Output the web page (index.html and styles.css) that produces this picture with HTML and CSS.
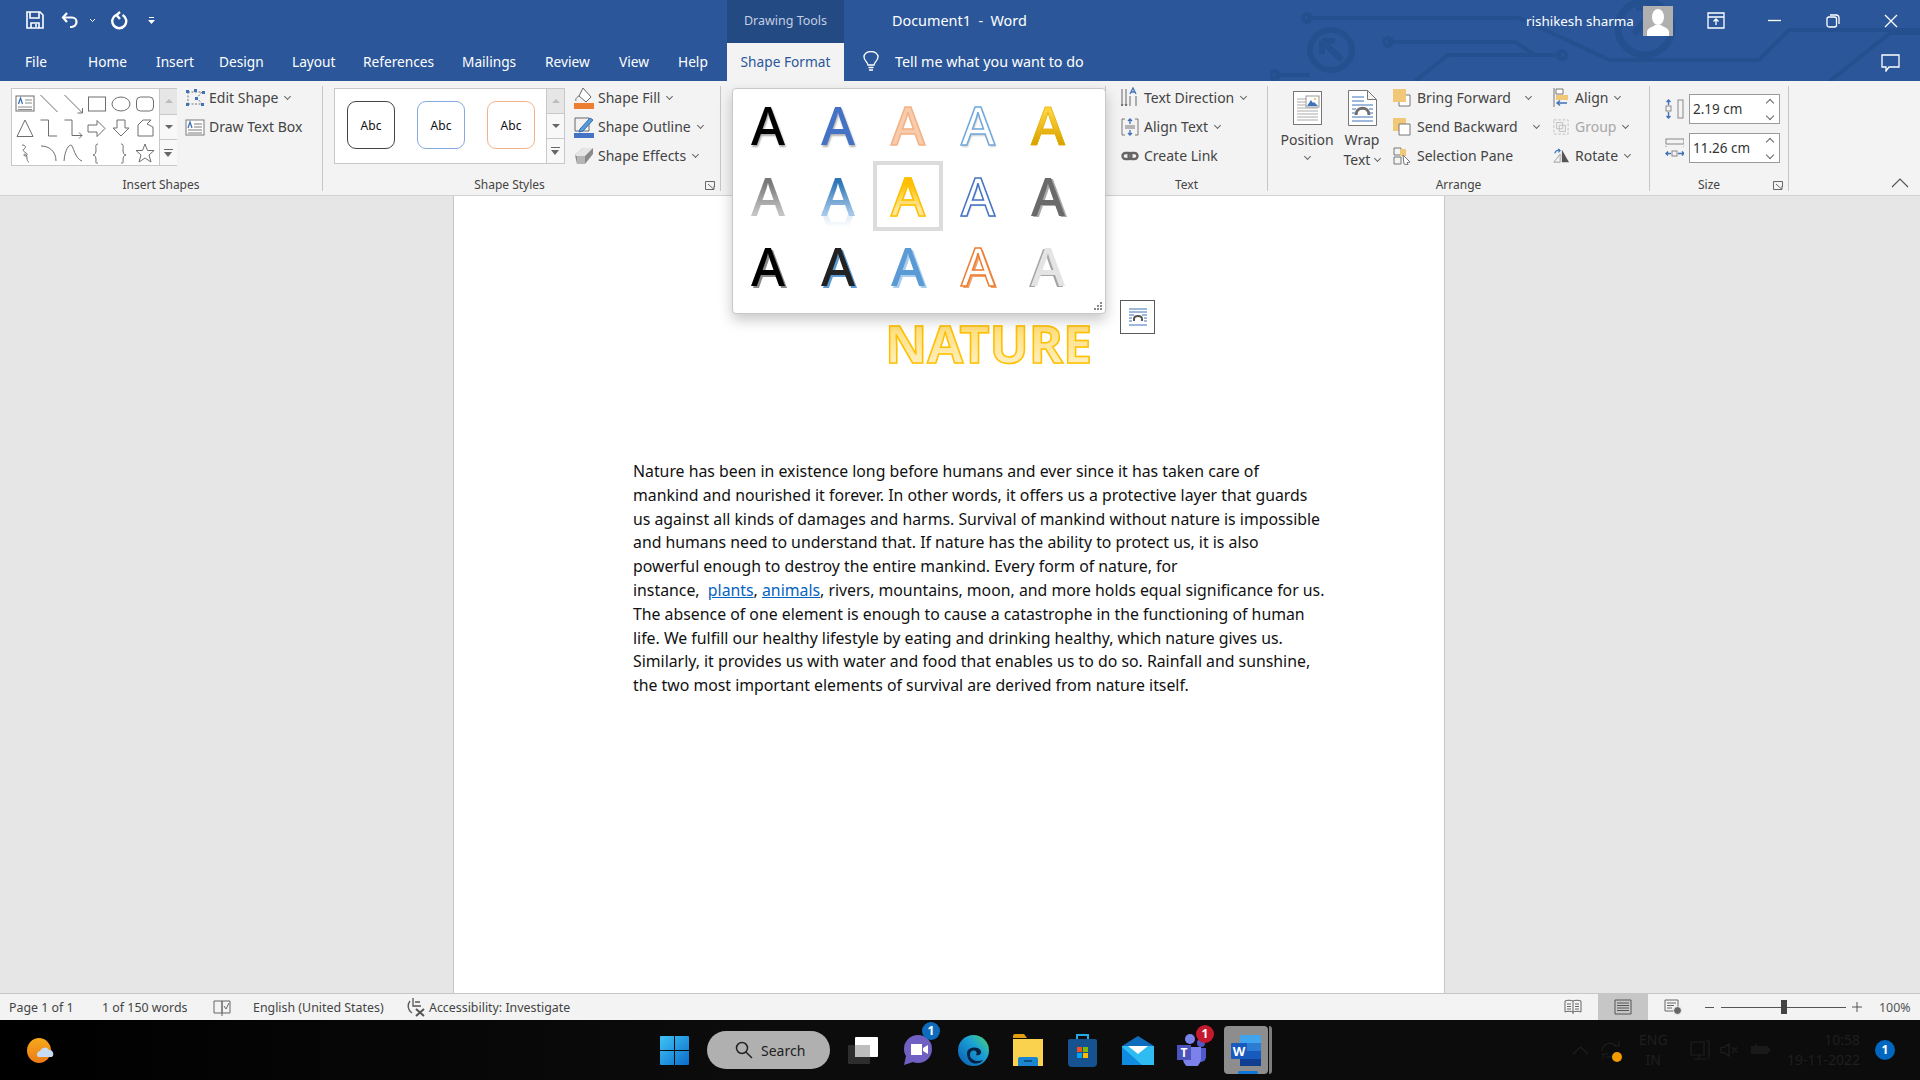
FILE: index.html
```html
<!DOCTYPE html>
<html lang="en">
<head>
<meta charset="utf-8">
<title>Document1 - Word</title>
<link rel="stylesheet" href="styles.css">
</head>
<body>
<div class="app">
  <header class="head">
    <svg class="circuit" viewBox="0 0 650 81" width="650" height="81" fill="none" stroke="#24508f" stroke-width="4">
      <path d="M37 18H249L340 60H489L519 30H700"/><circle cx="37" cy="18" r="4"/>
      <path d="M118 42H245L265 55H292"/><circle cx="118" cy="42" r="4"/><circle cx="292" cy="55" r="4"/>
      <path d="M292 55H178L145 81"/><path d="M650 33H620L560 81"/>
      <ellipse cx="61" cy="50" rx="21" ry="20" stroke-width="6"/><path d="M52 41h13M52 41v13M52 41l20 19" stroke-width="6"/>
      <circle cx="375" cy="28" r="27" stroke-width="7"/><path d="M366 8h20v18M386 8l-22 26" stroke-width="6"/>
      <circle cx="5" cy="75" r="4"/><path d="M5 75H40"/>
    </svg>
    <div class="titlebar">
      <div class="qat">
        <svg class="q-save" width="18" height="18" viewBox="0 0 18 18" fill="none" stroke="#fff" stroke-width="1.6"><path d="M1 1h13l3 3v13H1z"/><path d="M4 1v6h9V1M5 17v-5h8v5" /><path d="M10 13v3" /></svg>
        <svg class="q-undo" width="20" height="18" viewBox="0 0 18 18" fill="none" stroke="#fff" stroke-width="2.2"><path d="M6 2 2 6.500l4 4.500"/><path d="M2 6.500h9a4.500 4.500 0 0 1 4.500 4.500 5 5 0 0 1-5 5H9"/></svg>
        <svg class="chev-w" width="7" height="5" viewBox="0 0 7 5" fill="none" stroke="#fff"><path d="m1 1 2.500 2.500L6 1"/></svg>
        <svg class="q-redo" width="18" height="19" viewBox="0 0 18 19" fill="none" stroke="#fff" stroke-width="2.4"><path d="M6 4a7 7 0 1 0 6.500 0"/><path d="M10 1 6.500 4l3.500 4"/></svg>
        <svg class="q-more" width="7" height="7" viewBox="0 0 7 7" fill="#fff"><path d="M1 0h5v1H1zM0 3h7L3.500 7z"/></svg>
      </div>
      <div class="context">Drawing Tools</div>
      <div class="doc-title">Document1&nbsp; -&nbsp; Word</div>
      <div class="account">
        <span class="user">rishikesh sharma</span>
        <span class="avatar"><svg width="30" height="30" viewBox="0 0 30 30" fill="#fff"><ellipse cx="15" cy="11" rx="6" ry="8"/><path d="M4 30v-4c0-4 6-5 8-7h6c2 2 8 3 8 7v4z"/></svg></span>
        <svg class="w-display" width="18" height="17" viewBox="0 0 18 17" fill="none" stroke="#fff" stroke-width="1.300"><path d="M1 1h16v15H1zM1 5h16"/><path d="M9 13V7M6.500 9.500 9 7l2.500 2.500"/></svg>
        <svg class="w-min" width="13" height="13" viewBox="0 0 13 13" stroke="#fff" stroke-width="1.300"><path d="M0 6.500h13"/></svg>
        <svg class="w-res" width="14" height="14" viewBox="0 0 14 14" fill="none" stroke="#fff" stroke-width="1.300"><rect x="1" y="3" width="9.500" height="10" rx="2"/><path d="M4 1h6a3 3 0 0 1 3 3v6"/></svg>
        <svg class="w-close" width="14" height="14" viewBox="0 0 14 14" stroke="#fff" stroke-width="1.300"><path d="m1 1 12 12M13 1 1 13"/></svg>
      </div>
    </div>
    <nav class="tabs">
      <span class="tab">File</span><span class="tab">Home</span><span class="tab">Insert</span><span class="tab">Design</span><span class="tab">Layout</span><span class="tab">References</span><span class="tab">Mailings</span><span class="tab">Review</span><span class="tab">View</span><span class="tab">Help</span>
      <span class="tab tab-on">Shape Format</span>
      <span class="tell">
        <svg width="18" height="21" viewBox="0 0 18 21" fill="none" stroke="#fff" stroke-width="1.300"><path d="M6 14c0-3-4-4-4-8a7 5.500 0 0 1 14 0c0 4-4 5-4 8z"/><path d="M6.500 16.500h5M7 19h4"/></svg>
        Tell me what you want to do
      </span>
      <svg class="comment" width="19" height="18" viewBox="0 0 19 18" fill="none" stroke="#fff" stroke-width="1.300"><path d="M1 1h17v12H8l-3 4v-4H1z"/></svg>
    </nav>
  </header>

  <section class="ribbon">
    <div class="group g-insert">
      <div class="body">
        <div class="gal gal-shapes">
          <svg width="147" height="76" viewBox="0 0 147 76" fill="none" stroke="#6e6e6e">
            <rect x="4" y="7" width="18" height="15" fill="#fff"/><path d="M13 11h7M13 14h7M6 18h14M6 20.500h14" stroke="#8a8a8a"/><path d="M6.500 15 8.500 9l2 6" stroke="#3f72b8" stroke-width="1.300"/>
            <path d="m28.500 6 17 17M52.500 6l18 18M70.500 24v-5M70.500 24h-5"/>
            <rect x="76.500" y="8" width="17" height="14"/><ellipse cx="109" cy="15" rx="9" ry="7"/><rect x="124.500" y="8" width="17" height="14" rx="4"/>
            <path d="M5 47.500 13 31l8 16.500zM28.500 31h8v16H45M52.500 31H60v15.500h10M67 43.500l3 3-3 3M76 36h9v-4.500l8 8-8 8V43h-9zM105 31h8v8h4l-8 8-8-8h4zM126 36l5-5h8l-4 4 6 3v9h-15z"/>
            <path d="M10 56c3 0 5 2 2 4s2 3 3 5-3 3-3 1 3-1 3 3 2 4 2 4M29 57c8 0 15 5 15 15M52 72c1-12 5-16 7-16s4 14 11 16M86 55c-3 0-2 3-2 6s-1 5-3 5c2 0 3 2 3 5s-1 3 2 3M109 55c3 0 2 3 2 6s1 5 3 5c-2 0-3 2-3 5s1 3-2 3M133 55l2.500 6.500h6.500l-5 4.500 2 7-6-4-6 4 2-7-5-4.500h6.500z"/>
          </svg>
          <div class="scroll">
            <span class="sb sb-up"><i class="up"></i></span>
            <span class="sb"><i class="down"></i></span>
            <span class="sb"><i class="more"></i></span>
          </div>
        </div>
        <div class="col col-edit">
          <div class="cmd"><svg class="ic" width="20" height="18" viewBox="0 0 20 18" fill="none"><path d="M3 3h14M3 3v12M3 15h14M17 3l-5 6 5 6" stroke="#777" stroke-dasharray="2 1.500"/><path d="M1 1h3v3H1zM9 0h3v3H9zM17 2h3v3h-3zM10 8h3v3h-3zM1 14h3v3H1zM16 14h3v3h-3z" fill="#3f72b8"/></svg><span>Edit Shape</span><i class="chev"></i></div>
          <div class="cmd"><svg class="ic" width="20" height="18" viewBox="0 0 20 18" fill="none" stroke="#7a7a7a"><rect x="1" y="2" width="18" height="15" fill="#fff"/><path d="M9 6h8M9 9h8M3 12h14M3 15h14"/><path d="M3 10 5 4l2 6" stroke="#3f72b8" stroke-width="1.300"/></svg><span>Draw Text Box</span></div>
        </div>
      </div>
      <div class="label">Insert Shapes</div>
    </div>

    <div class="group g-styles">
      <div class="body">
        <div class="gal gal-styles">
          <div class="abc-row">
            <span class="abc abc-k">Abc</span>
            <span class="abc abc-b">Abc</span>
            <span class="abc abc-o">Abc</span>
          </div>
          <div class="scroll">
            <span class="sb sb-up"><i class="up"></i></span>
            <span class="sb"><i class="down"></i></span>
            <span class="sb"><i class="more"></i></span>
          </div>
        </div>
        <div class="col col-shape">
          <div class="cmd"><svg class="ic" width="20" height="22" viewBox="0 0 20 22" fill="none" stroke="#666"><path d="M9 1l8 9-5 5-7-6z" fill="#fff"/><path d="M5 9c-2 1-4 3-3 5" /><path d="M0 16h20v6H0z" fill="#ed7d31" stroke="none"/></svg><span>Shape Fill</span><i class="chev"></i></div>
          <div class="cmd"><svg class="ic" width="20" height="22" viewBox="0 0 20 22" fill="none" stroke="#666"><path d="M1 2h14v13H1z"/><path d="m6 13 10-11 3 2L9 15l-4 1z" fill="#5b9bd5" stroke="#2e6fb5"/><path d="M0 17h20v5H0z" fill="#4472c4" stroke="none"/></svg><span>Shape Outline</span><i class="chev"></i></div>
          <div class="cmd"><svg class="ic" width="20" height="20" viewBox="0 0 20 20"><path d="M1 9 9 2h10v6l-8 10H3z" fill="#8a8a8a"/><path d="M1 9 9 2h10l-8 8H2z" fill="#e5e5e5"/><path d="M3 10h8v8H3z" fill="#b5b5b5"/></svg><span>Shape Effects</span><i class="chev"></i></div>
        </div>
      </div>
      <div class="label">Shape Styles</div>
      <svg class="launch" width="10" height="9" viewBox="0 0 10 9" fill="none" stroke="#666"><path d="M9.500 6V.5H.5v8H6"/><path d="m3 3 6 5.500M9 5v3.500H5.500"/></svg>
    </div>

    <div class="group g-wordart"></div>

    <div class="group g-text">
      <div class="body">
        <div class="col">
          <div class="cmd"><svg class="ic" width="18" height="22" viewBox="0 0 18 22" fill="none" stroke="#666"><path d="M1 2v17M5 2v17M9 9v10M15 9v10M1 19l-1-2M1 19l1-2M5 19l-1-2M5 19l1-2"/><path d="m9 7 3-6 3 6M10 5h4" stroke="#3f72b8" stroke-width="1.300"/></svg><span>Text Direction</span><i class="chev"></i></div>
          <div class="cmd"><svg class="ic" width="18" height="18" viewBox="0 0 18 18" fill="none" stroke="#777"><path d="M4 1H1v16h3M14 1h3v16h-3M4 8h10M4 10h10" /><path d="M9 6V1M7 3l2-2 2 2M9 12v5M7 15l2 2 2-2" stroke="#3f72b8" stroke-width="1.300"/></svg><span>Align Text</span><i class="chev"></i></div>
          <div class="cmd"><svg class="ic" width="18" height="12" viewBox="0 0 18 12" fill="none" stroke="#666" stroke-width="2.400"><rect x="1.500" y="3" width="9" height="6" rx="3"/><rect x="7.500" y="3" width="9" height="6" rx="3"/></svg><span>Create Link</span></div>
        </div>
      </div>
      <div class="label">Text</div>
    </div>

    <div class="group g-arrange">
      <div class="body">
        <div class="big big-pos">
          <svg width="29" height="34" viewBox="0 0 29 34" fill="#fff" stroke="#777"><rect x=".5" y=".5" width="28" height="33"/><path d="M4 8h9M4 11h9M4 14h9M4 17h21M4 20h21M4 23h21M4 26h21M4 29h21" fill="none" stroke="#aaa"/><rect x="13" y="5" width="13" height="11" stroke="#999"/><path d="m14 15 4-6 2 3 1-1 4 4z" fill="#3f72b8" stroke="none"/><circle cx="22" cy="8" r="1" fill="#f0b44c" stroke="none"/></svg>
          <span>Position</span><i class="chev"></i>
        </div>
        <div class="big big-wrap">
          <svg width="29" height="36" viewBox="0 0 29 36" fill="#fff" stroke="#777"><path d="M.5.500h19l9 9v26H.5zM19.500.5v9h9"/><path d="M4 7h12M4 11h12M4 15h21M4 19h4M21 19h4M4 23h3M22 23h3M4 27h21M4 31h21" fill="none" stroke="#3f72b8"/><path d="M8 25c0-9 13-9 13 0" fill="none" stroke="#6d6d6d" stroke-width="3"/></svg>
          <span>Wrap</span><span class="wrapline">Text<i class="chev"></i></span>
        </div>
        <div class="col col-arr1">
          <div class="cmd c-bring"><svg class="ic" width="18" height="18" viewBox="0 0 18 18"><path d="M6 6h11v11H6z" fill="#fff" stroke="#777"/><path d="M0 0h13v13H0z" fill="#f0c878"/></svg><span>Bring Forward</span><i class="chev"></i></div>
          <div class="cmd c-send"><svg class="ic" width="18" height="18" viewBox="0 0 18 18"><path d="M0 0h13v13H0z" fill="#f0c878"/><path d="M6 6h11v11H6z" fill="#fff" stroke="#777"/></svg><span>Send Backward</span><i class="chev"></i></div>
          <div class="cmd"><svg class="ic" width="18" height="18" viewBox="0 0 18 18" fill="none" stroke="#777"><path d="M1 1h7v7H1zM1 10h7v7H1z"/><path d="M7 2h6v7H7z" fill="#f0c878" stroke="none"/><path d="m10 8 7 7-3 .5 1 2.500-4-1z" fill="#fff"/></svg><span>Selection Pane</span></div>
        </div>
        <div class="col col-arr2">
          <div class="cmd"><svg class="ic" width="16" height="19" viewBox="0 0 16 19" fill="none"><path d="M1 0v19" stroke="#777"/><path d="M3 1h7v5H3z" stroke="#777" fill="#fff"/><path d="M3 7h12v5H3z" fill="#f0c878"/><path d="M14 15H4M7 12.500 4 15l3 2.500" stroke="#3f72b8" stroke-width="1.400"/></svg><span>Align</span><i class="chev"></i></div>
          <div class="cmd cmd-off"><svg class="ic" width="16" height="18" viewBox="0 0 18 18" fill="none" stroke="#bbb"><path d="M1 1h16v16H1z" stroke-dasharray="3 2"/><path d="M4 4h7v7H4zM7 7h7v7H7z"/></svg><span>Group</span><i class="chev"></i></div>
          <div class="cmd"><svg class="ic" width="16" height="17" viewBox="0 0 18 17"><path d="M10 16V2l8 14z" fill="#555"/><path d="M8 7 1 16h7z" fill="none" stroke="#999"/><path d="M2 6c1-3 3-4 6-3M6 1l2 2-2 2" fill="none" stroke="#3f72b8" stroke-width="1.300"/></svg><span>Rotate</span><i class="chev"></i></div>
        </div>
      </div>
      <div class="label">Arrange</div>
    </div>

    <div class="group g-size">
      <div class="body">
        <div class="size-rows">
          <div class="size-row">
            <svg width="19" height="20" viewBox="0 0 19 20" fill="none" stroke="#888"><rect x="13" y="1" width="5" height="18"/><rect x="1" y="7" width="5" height="5"/><path d="M3.500 6V1M1.500 3l2-2 2 2M3.500 13v6M1.500 17l2 2 2-2" stroke="#3f72b8" stroke-width="1.400"/></svg>
            <div class="spin"><span>2.19 cm</span><span class="arrows"><i class="a-up"></i><i class="a-dn"></i></span></div>
          </div>
          <div class="size-row">
            <svg width="19" height="20" viewBox="0 0 19 20" fill="none" stroke="#888"><rect x="1" y="1" width="18" height="5"/><rect x="7" y="13" width="5" height="5"/><path d="M6 15.500H1M3 13.500l-2 2 2 2M13 15.500h6M17 13.500l2 2-2 2" stroke="#3f72b8" stroke-width="1.400"/><path d="M1 8v2M19 8v2" stroke-dasharray="1 1"/></svg>
            <div class="spin"><span>11.26 cm</span><span class="arrows"><i class="a-up"></i><i class="a-dn"></i></span></div>
          </div>
        </div>
      </div>
      <div class="label">Size</div>
      <svg class="launch" width="10" height="9" viewBox="0 0 10 9" fill="none" stroke="#666"><path d="M9.500 6V.5H.5v8H6"/><path d="m3 3 6 5.500M9 5v3.500H5.500"/></svg>
    </div>
    <div class="ribbon-end"><svg width="18" height="10" viewBox="0 0 18 10" fill="none" stroke="#555" stroke-width="1.200"><path d="m1 9 8-8 8 8"/></svg></div>

    <div class="wa-gallery">
      <span class="wa w1">A</span><span class="wa w2">A</span><span class="wa w3">A</span><span class="wa w4">A</span><span class="wa w5">A</span>
      <span class="wa w6">A</span><span class="wa w7">A</span><span class="wa w8 wa-sel">A</span><span class="wa w9">A</span><span class="wa w10">A</span>
      <span class="wa w11">A</span><span class="wa w12">A</span><span class="wa w13">A</span><span class="wa w14">A</span><span class="wa w15">A</span>
      <svg class="grip" width="8" height="8" viewBox="0 0 8 8" fill="#8a8a8a"><path d="M6 0h2v2H6zM3 3h2v2H3zM6 3h2v2H6zM0 6h2v2H0zM3 6h2v2H3zM6 6h2v2H6z"/></svg>
    </div>
  </section>

  <main class="workspace">
    <article class="page">
      <div class="wordart-wrap">
        <span class="wordart">NATURE</span>
        <span class="layout-btn"><svg width="20" height="20" viewBox="0 0 20 20" fill="none" stroke="#3f72b8"><path d="M1 2h18M1 5h18M1 8h5M14 8h5M1 11h3M16 11h3M1 14h3M16 14h3M1 18h18"/><path d="M6 14v-2c0-4 8-4 8 0v2" stroke="#555" stroke-width="2"/></svg></span>
      </div>
      <p class="para">Nature has been in existence long before humans and ever since it has taken care of<br>mankind and nourished it forever. In other words, it offers us a protective layer that guards<br>us against all kinds of damages and harms. Survival of mankind without nature is impossible<br>and humans need to understand that. If nature has the ability to protect us, it is also<br>powerful enough to destroy the entire mankind. Every form of nature, for<br>instance,&nbsp; <a class="lnk">plants</a>, <a class="lnk">animals</a>, rivers, mountains, moon, and more holds equal significance for us.<br>The absence of one element is enough to cause a catastrophe in the functioning of human<br>life. We fulfill our healthy lifestyle by eating and drinking healthy, which nature gives us.<br>Similarly, it provides us with water and food that enables us to do so. Rainfall and sunshine,<br>the two most important elements of survival are derived from nature itself.</p>
    </article>
  </main>

  <footer class="status">
    <div class="st-left">
      <span>Page 1 of 1</span>
      <span>1 of 150 words</span>
      <svg width="18" height="17" viewBox="0 0 18 17" fill="none" stroke="#666"><path d="M9 2H1v12h8zM9 2h8v12H9zM9 14v3"/><path d="m11 7 2 3 3-6" stroke="#666"/></svg>
      <span>English (United States)</span>
      <span class="acc"><svg width="20" height="20" viewBox="0 0 20 20" fill="none" stroke="#555" stroke-width="1.300"><path d="M4 4a8 8 0 0 0 2 12M7 1v8h8M9 5h5"/><path d="m10 12 8 7M18 12l-8 7" stroke-width="2"/></svg>Accessibility: Investigate</span>
    </div>
    <div class="st-right">
      <span class="view"><svg width="18" height="16" viewBox="0 0 18 16" fill="none" stroke="#666"><path d="M9 2C7 1 3 1 1 2v11c2-1 6-1 8 0 2-1 6-1 8 0V2c-2-1-6-1-8 0zM9 2v13M3 5h4M3 7.500h4M3 10h4M11 5h4M11 7.500h4M11 10h4"/></svg></span>
      <span class="view view-on"><svg width="18" height="16" viewBox="0 0 18 16" fill="none" stroke="#555"><path d="M1 1h16v14H1zM3 4h12M3 6.500h12M3 9h12M3 11.500h12"/></svg></span>
      <span class="view"><svg width="18" height="16" viewBox="0 0 18 16" fill="none" stroke="#666"><path d="M1 1h13v11H1zM3 4h9M3 6.500h7M3 9h5"/><circle cx="13.500" cy="11.500" r="4" fill="#666" stroke="#f3f3f3"/></svg></span>
      <div class="zoom">
        <i class="z-minus"></i>
        <div class="z-track"><i class="z-thumb"></i></div>
        <svg class="z-plus" width="10" height="10" viewBox="0 0 10 10" stroke="#555"><path d="M0 5h10M5 0v10"/></svg>
        <span class="z-val">100%</span>
      </div>
    </div>
  </footer>

  <div class="taskbar">
    <svg class="weather" width="28" height="25" viewBox="0 0 28 25"><defs><linearGradient id="sun" x1="0" y1="0" x2="0" y2="1"><stop offset="0" stop-color="#f6a91c"/><stop offset="1" stop-color="#ec7a16"/></linearGradient></defs><ellipse cx="12" cy="12.500" rx="12" ry="12.500" fill="url(#sun)"/><path d="M11 19a3.500 3.500 0 0 1 2-6 5 5 0 0 1 9-1 4 4 0 0 1 3 7z" fill="#c7dcf3"/></svg>
    <div class="apps">
      <svg class="a-win" width="29" height="29" viewBox="0 0 29 29"><defs><linearGradient id="win" x1="0" y1="0" x2="1" y2="1"><stop offset="0" stop-color="#3fc4f6"/><stop offset="1" stop-color="#0b6ccb"/></linearGradient></defs><path d="M0 1a1 1 0 0 1 1-1h13v14H0zM15 0h13a1 1 0 0 1 1 1v13H15zM0 15h14v14H1a1 1 0 0 1-1-1zM15 15h14v13a1 1 0 0 1-1 1H15z" fill="url(#win)"/></svg>
      <div class="search"><svg width="18" height="18" viewBox="0 0 18 18" fill="none" stroke="#222" stroke-width="1.500"><circle cx="7" cy="7" r="5.500"/><path d="m11 11 6 6"/></svg>Search</div>
      <svg class="a-tv" width="30" height="27" viewBox="0 0 30 27"><rect x="0" y="8" width="22" height="19" rx="1" fill="#2d2d2d"/><rect x="7" y="0" width="23" height="20" rx="1" fill="#fff"/><rect x="7" y="8" width="15" height="12" fill="#bdbdbd"/></svg>
      <span class="app-slot a-chat"><svg width="30" height="32" viewBox="0 0 30 32"><circle cx="15" cy="15" r="14" fill="#7160c4"/><path d="M3 22 1 31l9-3z" fill="#7160c4"/><path d="M8 10h11v11H8z" fill="#fff"/><path d="m20 14 5-3v9l-5-3z" fill="#fff"/></svg><b class="badge b-blue">1</b></span>
      <svg class="a-edge" width="31" height="31" viewBox="0 0 31 31"><defs><linearGradient id="edge" x1="0" y1="1" x2="1" y2="0"><stop offset="0" stop-color="#0b58b0"/><stop offset=".6" stop-color="#1aa1d6"/><stop offset="1" stop-color="#50d666"/></linearGradient></defs><circle cx="15.500" cy="15.500" r="15.500" fill="url(#edge)"/><path d="M9 18c0-6 11-8 14-2 1 3-2 5-5 4 3-4-5-7-6-1-1 5 6 9 13 6-4 6-16 5-16-7z" fill="#06213f"/></svg>
      <svg class="a-folder" width="30" height="32" viewBox="0 0 30 32"><path d="M0 2a2 2 0 0 1 2-2h9l3 4H0z" fill="#e49d0e"/><path d="M0 5h30v27H0z" fill="#fbd24e"/><path d="M5 32v-7a2 2 0 0 1 2-2h16a2 2 0 0 1 2 2v7z" fill="#1b85d0"/><path d="M11 27h8" stroke="#0a3f70" stroke-width="1.500"/></svg>
      <svg class="a-store" width="29" height="33" viewBox="0 0 29 33"><path d="M9 6V1h11v5" fill="none" stroke="#27a9e6" stroke-width="2"/><path d="M0 7a2 2 0 0 1 2-2h25a2 2 0 0 1 2 2v22a4 4 0 0 1-4 4H4a4 4 0 0 1-4-4z" fill="#15528f"/><path d="M9 13h5v5H9z" fill="#f25022"/><path d="M15 13h5v5h-5z" fill="#7fba00"/><path d="M9 19h5v5H9z" fill="#00a4ef"/><path d="M15 19h5v5h-5z" fill="#ffb900"/></svg>
      <svg class="a-mail" width="32" height="29" viewBox="0 0 32 29"><path d="M16 0 0 10h32z" fill="#0f6cbd"/><path d="M0 10h32v19H0z" fill="#2ebcf2"/><path d="m6 10 10 8 10-8z" fill="#fff"/><path d="M0 29V11l20 18z" fill="#0f8be0"/></svg>
      <span class="app-slot a-teams"><svg width="30" height="32" viewBox="0 0 30 32"><circle cx="13" cy="5" r="5" fill="#7b83eb"/><circle cx="24" cy="9" r="4" fill="#5059c9"/><path d="M19 14h10v9a5 5 0 0 1-10 0z" fill="#5059c9"/><path d="M6 13h18v12a7 7 0 0 1-18 0z" fill="#7b83eb"/><path d="M0 11h14v15H0z" fill="#4b53bc"/><text x="7" y="23" class="t-letter">T</text></svg><b class="badge b-red">1</b></span>
      <span class="word-tile"><svg width="30" height="31" viewBox="0 0 30 31"><path d="M9 0h21v8H9z" fill="#41a5ee"/><path d="M9 8h21v8H9z" fill="#2b7cd3"/><path d="M9 16h21v8H9z" fill="#185abd"/><path d="M9 24h21v7H9z" fill="#103f91"/><rect x="0" y="8" width="16" height="16" rx="1" fill="#185abd"/><text x="8" y="21" class="w-letter">W</text></svg><i class="run"></i></span>
      <i class="stack"></i>
    </div>
    <div class="tray">
      <svg width="17" height="9" viewBox="0 0 17 9" fill="none" stroke="#1f1f1f" stroke-width="1.200"><path d="m1 8 7.500-7L16 8"/></svg>
      <span class="sync"><svg width="19" height="20" viewBox="0 0 19 20" fill="none" stroke="#1f1f1f" stroke-width="1.200"><path d="M1 11a8 8 0 0 1 14-5M18 1v5h-5M2 19v-5h5M5 17h8"/></svg><i class="dot"></i></span>
      <span class="lang">ENG<br>IN</span>
      <svg width="20" height="20" viewBox="0 0 20 20" fill="none" stroke="#1f1f1f" stroke-width="1.200"><path d="M1 2h13v13H1zM4 19h13M9 15v4M16 1h3v18"/></svg>
      <svg class="tr-vol" width="18" height="14" viewBox="0 0 18 14" fill="none" stroke="#1f1f1f" stroke-width="1.200"><path d="M1 4.500h3L9 1v12L4 9.500H1zM12 4.500l5 5M17 4.500l-5 5"/></svg>
      <svg class="tr-bat" width="20" height="14" viewBox="0 0 20 14" fill="#1a1a1a"><path d="M1 3h3l3-3v3h11v8H1zM18 5h2v4h-2z"/></svg>
      <span class="clock">10:58<br>19-11-2022</span>
      <b class="notif">1</b>
    </div>
  </div>
</div>
</body>
</html>
```
FILE: styles.css
```css
* { box-sizing: border-box; }
html, body { margin: 0; height: 100%; }
body { font-family: "Noto Sans", "Open Sans", sans-serif; overflow: hidden; background: #e6e6e6; }
svg { display: block; flex: none; }
i { display: block; }
.app { width: 1920px; height: 1080px; display: flex; flex-direction: column; }

/* header */
.head { position: relative; height: 81px; background: #2b579a; color: #fff; overflow: hidden; flex: none; }
.circuit { position: absolute; right: 0; top: 0; }
.titlebar { position: relative; height: 43px; display: flex; align-items: stretch; }
.qat { width: 727px; padding: 0 0 3px 26px; display: flex; align-items: center; }
.q-undo { margin-left: 16px; }
.chev-w { margin-left: 9px; }
.q-redo { margin-left: 14px; }
.q-more { margin-left: 20px; }
.context { width: 117px; background: #234a83; color: #c3cfe2; font-size: 12.5px; padding-bottom: 2px; display: flex; align-items: center; justify-content: center; }
.doc-title { margin-left: 48px; font-size: 14.4px; padding-bottom: 2px; display: flex; align-items: center; }
.account { margin-left: auto; padding-bottom: 2px; display: flex; align-items: center; }
.user { font-size: 13.4px; width: 117px; }
.avatar { width: 30px; height: 30px; background: #b0b0b0; display: block; }
.w-display { margin-left: 34px; }
.w-min { margin-left: 43px; }
.w-res { margin-left: 45px; }
.w-close { margin-left: 44px; margin-right: 22px; }
.tabs { position: relative; height: 38px; padding-left: 25px; display: grid; grid-template-columns: 63px 68px 63px 73px 71px 99px 83px 74px 59px 49px 117px 1fr; align-items: stretch; font-size: 13.7px; }
.tab { display: flex; align-items: center; padding-bottom: 2px; }
.tab-on { background: #f3f3f3; color: #2b579a; justify-content: center; }
.tell { display: flex; align-items: center; gap: 15px; padding: 0 0 2px 18px; font-size: 14.3px; }
.comment { position: absolute; right: 20px; top: 11px; }

/* ribbon */
.ribbon { position: relative; height: 115px; flex: none; background: #f3f3f3; border-bottom: 1px solid #d2d2d2; display: flex; font-size: 14px; color: #444; z-index: 2; }
.group { position: relative; display: flex; flex-direction: column; height: 105px; margin-top: 5px; border-right: 1px solid #c6c6c6; }
.group > .body { flex: none; height: 90px; display: flex; margin-top: -3px; }
.label { height: 19px; font-size: 12px; text-align: center; line-height: 19px; color: #444; margin-top: 2px; }
.g-insert { width: 323px; }
.g-insert .body { padding-left: 11px; }
.g-styles { width: 398px; }
.g-styles .body { padding-left: 11px; }
.g-styles .label { padding-right: 24px; }
.g-wordart { width: 385px; }
.g-text { width: 162px; }
.g-text .body { padding-left: 15px; }
.g-arrange { width: 382px; }
.g-arrange .body { padding-left: 13px; }
.g-size { width: 139px; }
.g-size .body { padding-left: 15px; }
.g-size .label { padding-right: 20px; }
.ribbon-end { flex: 1; display: flex; justify-content: flex-end; align-items: flex-end; padding: 0 11px 7px 0; }
.col { display: flex; flex-direction: column; }
.cmd { height: 29px; display: flex; align-items: center; white-space: nowrap; }
.cmd .ic { margin-right: 5px; }
.cmd-off { color: #a8a8a8; }
.chev { width: 5px; height: 5px; border-right: 1px solid #666; border-bottom: 1px solid #666; transform: rotate(45deg); margin: -3px 0 0 7px; flex: none; }
.gal { background: #fff; border: 1px solid #c8c8c8; display: flex; margin-top: 5px; }
.gal-shapes { width: 166px; height: 78px; }
.gal-styles { width: 231px; height: 76px; }
.scroll { margin-left: auto; width: 18px; border-left: 1px solid #c8c8c8; display: flex; flex-direction: column; background: #f8f8f8; flex: none; }
.sb { flex: 1; display: flex; align-items: center; justify-content: center; border-bottom: 1px solid #c8c8c8; }
.sb:last-child { border-bottom: 0; }
.sb-up { background: #e6e6e6; }
.up { border: 4px solid transparent; border-bottom-color: #bcbcbc; border-top: 0; }
.down { border: 4px solid transparent; border-top-color: #666; border-bottom: 0; }
.more { width: 9px; height: 8px; border-top: 1px solid #666; position: relative; }
.more::after { content: ""; position: absolute; left: 0; top: 2px; border: 4.5px solid transparent; border-top: 5px solid #666; border-bottom: 0; }
.col-edit { margin-left: 8px; }
.col-edit .ic { margin-right: 4px; }
.abc-row { flex: 1; display: flex; padding: 12px 0 0 12px; gap: 22px; }
.abc { width: 48px; height: 48px; border: 1.5px solid; border-radius: 9px; font-size: 12px; display: flex; align-items: center; justify-content: center; color: #111; }
.abc-k { border-color: #444; }
.abc-b { border-color: #86a8e0; }
.abc-o { border-color: #f3b48c; }
.col-shape { margin-left: 9px; }
.col-shape .ic { margin-right: 4px; }
.launch { position: absolute; right: 5px; bottom: 1px; }
.g-text .ic { margin-right: 5px; }
.big { display: flex; flex-direction: column; align-items: center; padding-top: 8px; line-height: 20px; font-size: 14px; }
.big svg { margin-bottom: 5px; }
.big-pos { width: 52px; }
.big-pos .chev { margin: 4px 0 0; }
.big-wrap { width: 42px; margin-left: 8px; padding-top: 7px; }
.big-wrap svg { margin-bottom: 4px; }
.wrapline { display: flex; align-items: center; }
.wrapline .chev { margin-left: 5px; }
.col-arr1 { width: 160px; margin-left: 10px; }
.col-arr1 .ic { margin-right: 6px; }
.c-bring { width: 138px; }
.c-send { width: 146px; }
.c-bring .chev, .c-send .chev { margin-left: auto; }
.col-arr2 .ic { margin-right: 6px; }
.size-rows { padding-top: 11px; display: flex; flex-direction: column; gap: 9px; }
.size-row { display: flex; align-items: center; gap: 5px; }
.spin { width: 91px; height: 30px; background: #fff; border: 1px solid #9a9a9a; display: flex; align-items: center; padding-left: 3px; font-size: 13.5px; color: #333; }
.arrows { margin-left: auto; margin-right: 6px; display: flex; flex-direction: column; gap: 7px; }
.a-up, .a-dn { width: 6px; height: 6px; border: solid #666; border-width: 1px 0 0 1px; transform: rotate(45deg); }
.a-dn { transform: rotate(225deg); }

/* gallery */
.wa-gallery { position: absolute; left: 732px; top: 7px; width: 374px; height: 226px; background: #fff; border: 1px solid #c8c8c8; border-radius: 4px; box-shadow: 0 6px 14px rgba(0,0,0,.22); padding: 1px 0 0 0; display: grid; grid-template-columns: repeat(5, 70px); grid-auto-rows: 70.5px; z-index: 5; }
.wa { display: flex; align-items: center; justify-content: center; font-size: 52px; line-height: 1; font-weight: 500; }
.wa-sel { border: 4px solid #dcdcdc; }
.grip { position: absolute; right: 3px; bottom: 3px; }
.w1 { color: #000; text-shadow: 1px 2px 2px rgba(0,0,0,.35); }
.w2 { color: #4472c4; text-shadow: 1px 2px 2px rgba(0,0,0,.3); }
.w3 { color: #f8cbad; -webkit-text-stroke: 1.500px #f4b183; }
.w4 { color: #fff; -webkit-text-stroke: 1.500px #6fa8dc; text-shadow: 1px 2px 2px rgba(0,0,0,.2); }
.w5 { color: transparent; background: linear-gradient(#ffd23c 30%, #d9a400 75%); -webkit-background-clip: text; background-clip: text; -webkit-text-stroke: .6px #e0ab00; }
.w6 { color: transparent; background: linear-gradient(#777 30%, #c4c4c4 75%); -webkit-background-clip: text; background-clip: text; }
.w7 { color: transparent; background: linear-gradient(#2e75b6 30%, #a5c8e8 75%); -webkit-background-clip: text; background-clip: text; -webkit-box-reflect: below -35px linear-gradient(transparent 55%, rgba(0,0,0,.35) 75%); }
.w8 { color: transparent; background: linear-gradient(#ffc000 30%, #ffe699 70%); -webkit-background-clip: text; background-clip: text; -webkit-text-stroke: 1.500px #ffc000; }
.w9 { color: #fff; -webkit-text-stroke: 1.500px #4472c4; text-shadow: 1px 1px 1px rgba(68,114,196,.4); }
.w10 { color: #6a6a6a; text-shadow: 2px 1px 0 #aaa; }
.w11 { color: #000; text-shadow: 2px 2px 0 #8a8a8a; }
.w12 { color: #222; text-shadow: 2px 2px 0 #5b9bd5; }
.w13 { color: #5b9bd5; text-shadow: 2px 2px 0 #a8cdee; }
.w14 { color: #fff; -webkit-text-stroke: 1.500px #ed7d31; text-shadow: 2px 2px 0 #f1a06a; }
.w15 { color: #e4e4e4; text-shadow: -2px 1px 0 #a5a5a5; }

/* document */
.workspace { flex: 1; min-height: 0; background: #e6e6e6; }
.page { width: 992px; height: 100%; margin-left: 453px; background: #fff; border: solid #c6c6c6; border-width: 0 1px; padding: 119px 0 0 179px; overflow: hidden; }
.wordart-wrap { position: relative; margin-left: 252px; height: 56px; }
.wordart { display: inline-block; font-size: 52px; line-height: 56px; font-weight: 700; color: transparent; background: linear-gradient(#ffd966, #fff2cc); -webkit-background-clip: text; background-clip: text; -webkit-text-stroke: 1.500px #ffc000; }
.layout-btn { position: absolute; left: 235px; top: -15px; width: 35px; height: 34px; background: #fff; border: 1px solid #5a5a5a; display: flex; align-items: center; justify-content: center; }
.para { margin: 89px 0 0; font-size: 15.84px; line-height: 23.8px; color: #111; white-space: nowrap; }
.lnk { color: #0563c1; text-decoration: underline; }

/* status */
.status { height: 27px; flex: none; background: #f3f3f3; border-top: 1px solid #c6c6c6; display: flex; justify-content: space-between; font-size: 12.4px; color: #444; position: relative; }
.st-left { padding-left: 9px; display: grid; grid-template-columns: 93px 111px 40px 153px auto; align-items: center; }
.acc { display: flex; align-items: center; gap: 3px; }
.st-right { display: flex; align-items: stretch; }
.view { width: 50px; display: flex; align-items: center; justify-content: center; }
.view-on { background: #c6c6c6; }
.zoom { display: flex; align-items: center; margin-left: 7px; width: 215px; }
.z-minus { width: 9px; height: 1px; background: #555; }
.z-track { position: relative; width: 125px; height: 1px; background: #555; margin-left: 7px; }
.z-thumb { position: absolute; left: 60px; top: -7px; width: 6px; height: 14px; background: #444; }
.z-plus { margin-left: 6px; }
.z-val { margin-left: 17px; color: #555; }

/* taskbar */
.taskbar { position: relative; height: 60px; flex: none; background: linear-gradient(90deg, #000, #0c0c0c 40%); display: flex; align-items: center; }
.weather { margin-left: 27px; }
.apps { position: absolute; left: 660px; top: 0; height: 60px; display: flex; align-items: center; }
.search { width: 123px; height: 38px; margin-left: 18px; background: #b0b0b0; border-radius: 19px; display: flex; align-items: center; gap: 8px; padding-left: 28px; font-size: 14px; color: #222; }
.a-tv { margin-left: 18px; }
.app-slot { position: relative; display: block; }
.a-chat { margin-left: 25px; }
.a-edge { margin-left: 25px; }
.a-folder { margin-left: 24px; }
.a-store { margin-left: 25px; }
.a-mail { margin-left: 25px; }
.a-teams { margin-left: 23px; }
.badge { position: absolute; width: 18px; height: 18px; border-radius: 50%; color: #fff; font-size: 12px; line-height: 18px; text-align: center; }
.b-blue { right: -7px; top: -12px; background: #0f6cbd; }
.b-red { right: -7px; top: -9px; background: #c4192f; }
.t-letter { font-size: 12px; font-weight: 700; fill: #fff; text-anchor: middle; }
.w-letter { font-size: 13px; font-weight: 700; fill: #fff; text-anchor: middle; }
.word-tile { position: relative; margin-left: 17px; width: 44px; height: 48px; background: #8d8d8d; border-radius: 4px; display: flex; align-items: center; justify-content: center; }
.run { position: absolute; left: 14px; bottom: 0; width: 20px; height: 3px; background: #0f78d4; border-radius: 2px; }
.stack { width: 3px; height: 48px; background: #7d7d7d; border-radius: 0 3px 3px 0; margin-left: 1px; }
.tray { position: absolute; right: 0; top: 0; height: 60px; width: 420px; display: flex; align-items: center; color: #1f1f1f; font-size: 14px; padding-left: 72px; }
.sync { position: relative; margin-left: 12px; display: block; }
.dot { position: absolute; right: -2px; bottom: -2px; width: 10px; height: 10px; background: #f39c00; border-radius: 50%; }
.lang { margin: 0 22px 0 19px; text-align: center; line-height: 20px; }
.tr-vol { margin-left: 10px; }
.tr-bat { margin-left: 12px; }
.clock { margin-left: auto; text-align: right; line-height: 20px; }
.notif { margin: 0 25px 0 15px; width: 20px; height: 20px; border-radius: 50%; background: #0067c0; color: #fff; font-size: 12px; line-height: 20px; text-align: center; }
```
